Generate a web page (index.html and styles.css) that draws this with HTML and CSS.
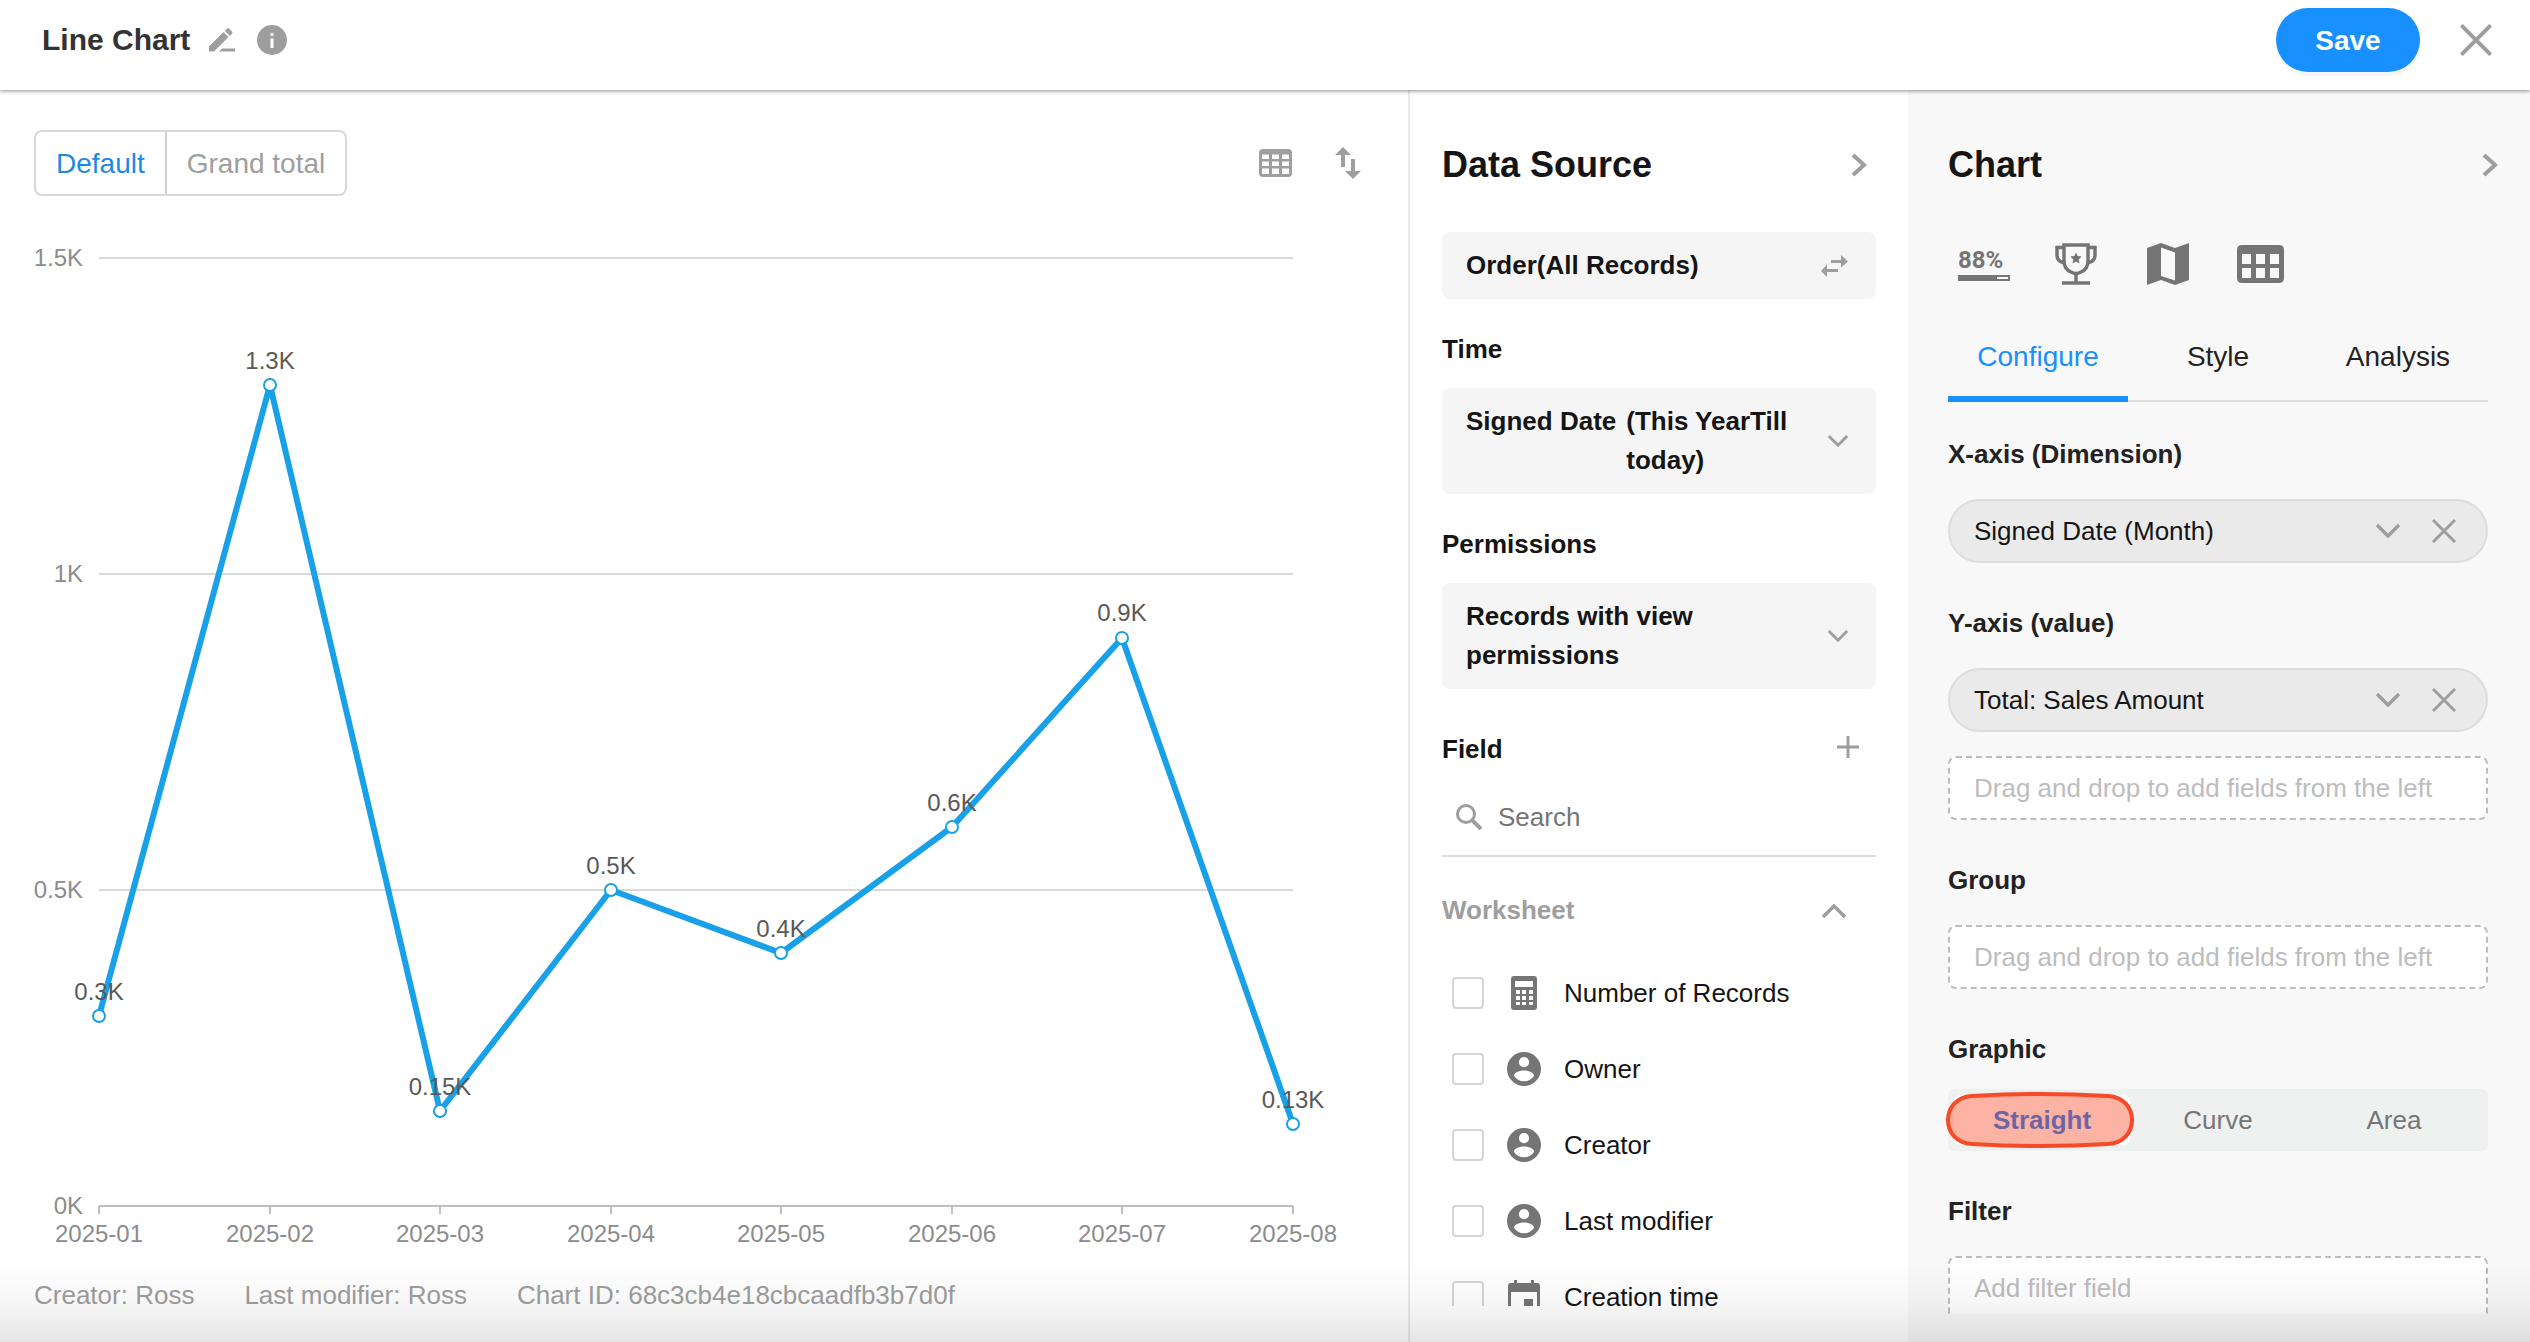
FILE: index.html
```
<!DOCTYPE html>
<html lang="en">
<head>
<meta charset="utf-8">
<title>Line Chart</title>
<link rel="stylesheet" href="styles.css">
</head>
<body>
<svg class="defs" aria-hidden="true">
  <symbol id="chevron-right" viewBox="0 0 16 24"><path d="M2 2l11 10L2 22" fill="none" stroke="currentColor" stroke-width="4"/></symbol>
  <symbol id="chevron-down" viewBox="0 0 24 14"><path d="M1 1l11 11L23 1" fill="none" stroke="currentColor" stroke-width="3.5"/></symbol>
  <symbol id="cross" viewBox="0 0 24 24"><path d="M1 1l22 22M23 1L1 23" fill="none" stroke="currentColor" stroke-width="3"/></symbol>
  <symbol id="user" viewBox="2 2 20 20"><path fill="currentColor" fill-rule="evenodd" d="M12 2a10 10 0 1 0 0 20 10 10 0 0 0 0-20zm0 3a3 3 0 1 1 0 6 3 3 0 0 1 0-6zm0 14.2a7.2 7.2 0 0 1-6-3.22c.03-1.99 4-3.08 6-3.08s5.970 1.090 6 3.080a7.200 7.200 0 0 1-6 3.220z"/></symbol>
</svg>
<div class="app">
  <header class="topbar">
    <h1 class="title">Line Chart</h1>
    <button class="icon-btn edit" aria-label="Rename"><svg width="26" height="24" viewBox="0 0 26 24" fill="currentColor"><path d="M0 18.500L14.500 4l5 5L5 23.500H0zM16 3l2-2.400q1-1 2 0l3 3q1 1 0 2L21 8zM13 20.500H26v3H10z"/></svg></button>
    <button class="icon-btn info" aria-label="Information"><svg width="30" height="30" viewBox="0 0 30 30"><circle cx="15" cy="15" r="15" fill="currentColor"/><path fill="#fff" d="M13.500 8h3v3h-3zM13.500 13.500h3V23h-3z"/></svg></button>
    <button class="save">Save</button>
    <button class="icon-btn close" aria-label="Close"><svg width="32" height="32"><use href="#cross"/></svg></button>
  </header>
  <main class="columns">
    <section class="preview">
      <div class="toolbar">
        <div class="switch"><button class="on">Default</button><button>Grand total</button></div>
        <button class="icon-btn table-view" aria-label="Show as table"><svg width="33" height="28" viewBox="0 0 33 28"><path fill="currentColor" fill-rule="evenodd" d="M4 0h25q4 0 4 4v20q0 4-4 4H4q-4 0-4-4V4q0-4 4-4zM3 5.500V10h7V5.500zM13 5.500V10h7V5.500zM23 5.500V10h7V5.500zM3 12.500V17h7v-4.500zM13 12.500V17h7v-4.500zM23 12.500V17h7v-4.500zM3 19.500V25h7v-5.500zM13 19.500V25h7v-5.500zM23 19.500V25h7v-5.500z"/></svg></button>
        <button class="icon-btn" aria-label="Sort"><svg width="26" height="32" viewBox="0 0 26 32" fill="currentColor"><path d="M8 0l8 8h-6v12H6V8H0zM16 12h4v12h6l-8 8-8-8h6z"/></svg></button>
      </div>
      <svg class="chart" viewBox="34 220 1340 1030" role="img" aria-label="Total sales amount by month">
        <g class="grid"><path d="M99 258H1293M99 574H1293M99 890H1293"/></g>
        <path class="axis" d="M99 1206H1293M99 1206v8M270 1206v8M440 1206v8M611 1206v8M781 1206v8M952 1206v8M1122 1206v8M1293 1206v8"/>
        <g class="tick y"><text x="83" y="266">1.5K</text><text x="83" y="582">1K</text><text x="83" y="898">0.5K</text><text x="83" y="1214">0K</text></g>
        <g class="tick x"><text x="99" y="1242">2025-01</text><text x="270" y="1242">2025-02</text><text x="440" y="1242">2025-03</text><text x="611" y="1242">2025-04</text><text x="781" y="1242">2025-05</text><text x="952" y="1242">2025-06</text><text x="1122" y="1242">2025-07</text><text x="1293" y="1242">2025-08</text></g>
        <polyline class="series" points="99,1016 270,385 440,1111 611,890 781,953 952,827 1122,638 1293,1124"/>
        <g class="points"><circle cx="99" cy="1016" r="6"/><circle cx="270" cy="385" r="6"/><circle cx="440" cy="1111" r="6"/><circle cx="611" cy="890" r="6"/><circle cx="781" cy="953" r="6"/><circle cx="952" cy="827" r="6"/><circle cx="1122" cy="638" r="6"/><circle cx="1293" cy="1124" r="6"/></g>
        <g class="value"><text x="99" y="1000">0.3K</text><text x="270" y="369">1.3K</text><text x="440" y="1095">0.15K</text><text x="611" y="874">0.5K</text><text x="781" y="937">0.4K</text><text x="952" y="811">0.6K</text><text x="1122" y="621">0.9K</text><text x="1293" y="1108">0.13K</text></g>
      </svg>
      <footer class="meta"><span>Creator: Ross</span><span>Last modifier: Ross</span><span>Chart ID: 68c3cb4e18cbcaadfb3b7d0f</span></footer>
    </section>

    <section class="source">
      <div class="panel-head"><h2>Data Source</h2><button class="icon-btn" aria-label="Collapse data source"><svg width="16" height="24"><use href="#chevron-right"/></svg></button></div>
      <button class="box"><span class="box-text">Order(All Records)</span><svg width="27" height="22" viewBox="0 0 27 22" fill="currentColor"><path d="M10 5h10V0l7 6.500-7 6V8H10zM17 14H6V9.500L0 16l6 6v-5h11z"/></svg></button>
      <h3>Time</h3>
      <button class="box"><span class="box-text pair"><span class="field-name">Signed Date</span><span>(This YearTill today)</span></span><svg width="20" height="12"><use href="#chevron-down"/></svg></button>
      <h3>Permissions</h3>
      <button class="box"><span class="box-text">Records with view permissions</span><svg width="20" height="12"><use href="#chevron-down"/></svg></button>
      <div class="field-head"><h3>Field</h3><button class="icon-btn add" aria-label="Add field"><svg width="22" height="22" viewBox="0 0 22 22"><path d="M11 0v22M0 11h22" stroke="currentColor" stroke-width="3"/></svg></button></div>
      <label class="search"><svg width="26" height="26" viewBox="0 0 26 26" fill="none" stroke="currentColor" stroke-width="3"><circle cx="10" cy="10" r="8.500"/><path d="M16 16l9 9" stroke-width="4"/></svg><input type="text" placeholder="Search" aria-label="Search fields"></label>
      <div class="group-head"><h3>Worksheet</h3><button class="icon-btn" aria-label="Collapse worksheet"><svg class="flip" width="24" height="14"><use href="#chevron-down"/></svg></button></div>
      <div class="fields">
        <label><input type="checkbox"><svg width="34" height="34" viewBox="0 0 34 34"><path fill="currentColor" fill-rule="evenodd" d="M7 0h20q3 0 3 3v28q0 3-3 3H7q-3 0-3-3V3q0-3 3-3zM8 5v6h18V5zM9 14v4h4v-4zM15 14v4h4v-4zM22 14v4h4v-4zM9 20v4h4v-4zM15 20v4h4v-4zM22 20v4h4v-4zM9 26v3h4v-3zM15 26v3h4v-3zM22 26v3h4v-3z"/></svg><span>Number of Records</span></label>
        <label><input type="checkbox"><svg width="34" height="34"><use href="#user"/></svg><span>Owner</span></label>
        <label><input type="checkbox"><svg width="34" height="34"><use href="#user"/></svg><span>Creator</span></label>
        <label><input type="checkbox"><svg width="34" height="34"><use href="#user"/></svg><span>Last modifier</span></label>
        <label><input type="checkbox"><svg width="34" height="34" viewBox="0 0 34 34"><path fill="currentColor" fill-rule="evenodd" d="M7 0h3v3h14V0h3v3h3q3 0 3 3v25q0 3-3 3H4q-3 0-3-3V6q0-3 3-3h3zM4 12v19h26V12zM17 19h9v9h-9z"/></svg><span>Creation time</span></label>
      </div>
    </section>

    <section class="config">
      <div class="panel-head"><h2>Chart</h2><button class="icon-btn" aria-label="Collapse chart settings"><svg width="16" height="24"><use href="#chevron-right"/></svg></button></div>
      <div class="types">
        <button aria-label="Progress"><svg width="52" height="42" viewBox="0 0 52 42" fill="currentColor"><text class="percent" x="0" y="25">88%</text><path fill-rule="evenodd" d="M0 32h52v6H0zM39 34v2h11v-2z"/></svg></button>
        <button aria-label="Ranking"><svg width="42" height="42" viewBox="0 0 42 42"><g fill="none" stroke="currentColor" stroke-width="3.500"><path d="M9 2h24v16q0 8-7 11-5 3-10 0-7-3-7-11z"/><path d="M9 4.500H2v8q0 6 8 7.500M33 4.500h7v8q0 6-8 7.500M21 31v8M7 40h28" /></g><path fill="currentColor" d="M21 9.500l1.700 3.600 4 .5-3 2.800.8 4-3.500-2-3.500 2 .8-4-3-2.800 4-.5z"/></svg></button>
        <button aria-label="Map"><svg width="42" height="42" viewBox="0 0 42 42"><path fill="currentColor" fill-rule="evenodd" d="M0 5L14 0l14 5L42 0v37l-14 5-14-5-14 5zM14 4.500V33l14 4.500V9.500z"/></svg></button>
        <button aria-label="Pivot table"><svg width="47" height="38" viewBox="0 0 47 38"><path fill="currentColor" fill-rule="evenodd" d="M5 0h37q5 0 5 5v28q0 5-5 5H5q-5 0-5-5V5q0-5 5-5zM5 9v10h9V9zM19 9v10h9V9zM33 9v10h9V9zM5 23v10h9V23zM19 23v10h9V23zM33 23v10h9V23z"/></svg></button>
      </div>
      <nav class="tabs"><button class="on">Configure</button><button>Style</button><button>Analysis</button></nav>
      <div class="settings">
        <h3>X-axis (Dimension)</h3>
        <div class="pill"><span>Signed Date (Month)</span><button class="icon-btn" aria-label="Dimension options"><svg width="24" height="14"><use href="#chevron-down"/></svg></button><button class="icon-btn" aria-label="Remove dimension"><svg width="24" height="24"><use href="#cross"/></svg></button></div>
        <h3>Y-axis (value)</h3>
        <div class="pill"><span>Total: Sales Amount</span><button class="icon-btn" aria-label="Value options"><svg width="24" height="14"><use href="#chevron-down"/></svg></button><button class="icon-btn" aria-label="Remove value"><svg width="24" height="24"><use href="#cross"/></svg></button></div>
        <div class="drop extra">Drag and drop to add fields from the left</div>
        <h3>Group</h3>
        <div class="drop">Drag and drop to add fields from the left</div>
        <h3>Graphic</h3>
        <div class="segments"><button class="on">Straight<svg class="marker" viewBox="0 0 188 56" aria-hidden="true"><path d="M26 4Q94 0 162 4C178 5 186 16 186 28S178 51 162 52Q94 56 26 52C10 51 2 40 2 28S10 5 26 4z"/></svg></button><button>Curve</button><button>Area</button></div>
        <h3>Filter</h3>
        <button class="drop">Add filter field</button>
      </div>
    </section>
  </main>
  <div class="fade"></div>
</div>
</body>
</html>
```
FILE: styles.css
```
* { box-sizing: border-box; }

body {
  margin: 0;
  background: #fff;
  color: #151515;
  font: 26px/39px "Liberation Sans", Arial, sans-serif;
}

h1, h2, h3 { margin: 0; }
h3 { font-size: 26px; line-height: 39px; }
svg { display: block; flex: none; }
.defs { position: absolute; width: 0; height: 0; }

button, input { font: inherit; color: inherit; }
button { padding: 0; border: 0; background: none; cursor: pointer; }
.icon-btn { display: flex; flex: none; color: #9e9e9e; }

.app { display: flex; flex-direction: column; height: 100vh; overflow: hidden; }

/* Top bar */
.topbar {
  display: flex;
  align-items: center;
  flex: none;
  height: 90px;
  padding: 0 38px 10px 42px;
  box-shadow: 0 1px 4px rgba(0, 0, 0, .45);
  z-index: 1;
}
.title { font-size: 30px; line-height: 40px; color: #333; }
.edit { margin-left: 19px; }
.info { margin-left: 22px; }
.save {
  width: 144px;
  height: 64px;
  margin-left: auto;
  border-radius: 32px;
  background: #1890ff;
  box-shadow: 0 4px 0 rgba(0, 0, 0, .04);
  color: #fff;
  font-size: 28px;
  font-weight: bold;
}
.close { margin-left: 40px; }

.columns { display: grid; grid-template-columns: minmax(0, 1fr) 500px 622px; flex: 1; min-height: 0; }

/* Chart preview */
.preview { padding: 40px 34px 0; overflow: hidden; }
.toolbar { display: flex; align-items: center; padding-right: 13px; }
.switch { display: flex; height: 66px; border: 2px solid #d9d9d9; border-radius: 8px; color: #9e9e9e; font-size: 28px; }
.switch button { padding: 0 20px; }
.switch button + button { border-left: 2px solid #d0d0d0; }
.switch .on { color: #1e88e5; }
.table-view { margin: 0 43px 0 auto; }
.chart { width: 100%; height: auto; margin-top: 24px; font-size: 24px; }
.grid path { stroke: #d9d9d9; stroke-width: 2; }
.axis { fill: none; stroke: #bfbfbf; stroke-width: 2; }
.tick { fill: #8c8c8c; }
.tick.y { text-anchor: end; }
.tick.x, .value { text-anchor: middle; }
.value { fill: #595959; }
.series { fill: none; stroke: #18a0e8; stroke-width: 6; stroke-linejoin: round; }
.points circle { fill: #fff; stroke: #18a0e8; stroke-width: 2; }
.meta { display: flex; gap: 50px; margin-top: 26px; color: #9e9e9e; }

/* Side panels */
.source, .config { display: flex; flex-direction: column; min-height: 0; padding-top: 55px; }
.source { padding: 55px 32px 36px; border-left: 2px solid #eaeaea; }
.panel-head { display: flex; align-items: center; justify-content: space-between; flex: none; }
.panel-head h2 { font-size: 36px; line-height: 40px; }
.source .panel-head { margin-bottom: 47px; padding-right: 9px; }

.box {
  display: flex;
  align-items: center;
  justify-content: space-between;
  gap: 8px;
  flex: none;
  padding: 14px 28px 14px 24px;
  border-radius: 8px;
  background: #f5f5f5;
  color: #9e9e9e;
  text-align: left;
}
.box-text { color: #151515; font-weight: bold; }
.pair { display: flex; gap: 10px; }
.field-name { flex: none; }
.source > h3 { margin: 31px 0 19px; }
.field-head { display: flex; align-items: center; justify-content: space-between; margin-top: 41px; padding-right: 17px; }
.add { padding-bottom: 6px; }
.search { display: flex; align-items: center; gap: 16px; flex: none; height: 88px; padding: 10px 14px 0; border-bottom: 2px solid #ddd; color: #9e9e9e; }
.search input { flex: 1; min-width: 0; padding: 0; border: 0; outline: 0; background: none; color: #151515; }
.search input::placeholder { color: #757575; opacity: 1; }
.group-head { display: flex; align-items: center; justify-content: space-between; flex: none; margin: 34px 0 25px; padding-right: 30px; color: #9e9e9e; }
.flip { transform: rotate(180deg); }
.fields { flex: 1; min-height: 0; overflow: hidden; }
.fields label { display: flex; align-items: center; height: 76px; padding-left: 10px; }
.fields svg { margin: 0 23px; color: #757575; }
.fields input { appearance: none; flex: none; width: 32px; height: 32px; margin: 0; border: 2px solid #d6d6d6; border-radius: 4px; background: #fff; }

/* Chart settings */
.config { padding-bottom: 28px; background: #f8f8f8; }
.config .panel-head { padding: 0 32px 0 40px; }
.types { display: flex; gap: 20px; flex: none; margin: 43px 42px 12px 40px; color: #757575; }
.types button { display: flex; align-items: center; justify-content: center; width: 72px; height: 72px; }
.percent { font-family: Roboto, "Liberation Sans", sans-serif; font-size: 24px; font-weight: bold; }
.tabs { display: grid; grid-template-columns: repeat(3, 1fr); flex: none; margin: 0 42px 0 40px; box-shadow: inset 0 -2px #ddd; font-size: 28px; }
.tabs button { height: 90px; padding-top: 4px; border-bottom: 6px solid transparent; color: #222; }
.tabs .on { border-color: #1890ff; color: #1890ff; }

.settings { flex: 1; min-height: 0; padding: 0 42px 0 40px; overflow: hidden; }
.settings h3 { margin: 41px 0 25px; color: #222; }
.settings h3:first-child { margin-top: 33px; }
.pill { display: flex; align-items: center; gap: 32px; height: 64px; padding: 0 30px 0 24px; border: 2px solid #ddd; border-radius: 32px; background: #eaeaea; }
.pill span { flex: 1; }
.drop { display: flex; align-items: center; width: 100%; height: 64px; padding: 0 24px; border: 2px dashed #bdbdbd; border-radius: 8px; background: #fff; color: #bdbdbd; }
.extra { margin-top: 24px; }
.segments { display: grid; grid-template-columns: repeat(3, 1fr); height: 62px; margin-top: -5px; padding: 6px; border-radius: 6px; background: #eff1f0; color: #757575; }
.segments .on { position: relative; border-radius: 6px; background: #fff; color: #0b7aff; font-weight: bold; }
.marker { position: absolute; top: -3px; left: -8px; width: 188px; height: 56px; overflow: visible; fill: rgba(249, 74, 37, .42); stroke: #f74a26; stroke-width: 4; }

.fade { position: fixed; inset: auto 0 0; height: 80px; background: linear-gradient(transparent, rgba(0, 0, 0, .03) 50%, rgba(0, 0, 0, .1)); pointer-events: none; z-index: 2; }
```
